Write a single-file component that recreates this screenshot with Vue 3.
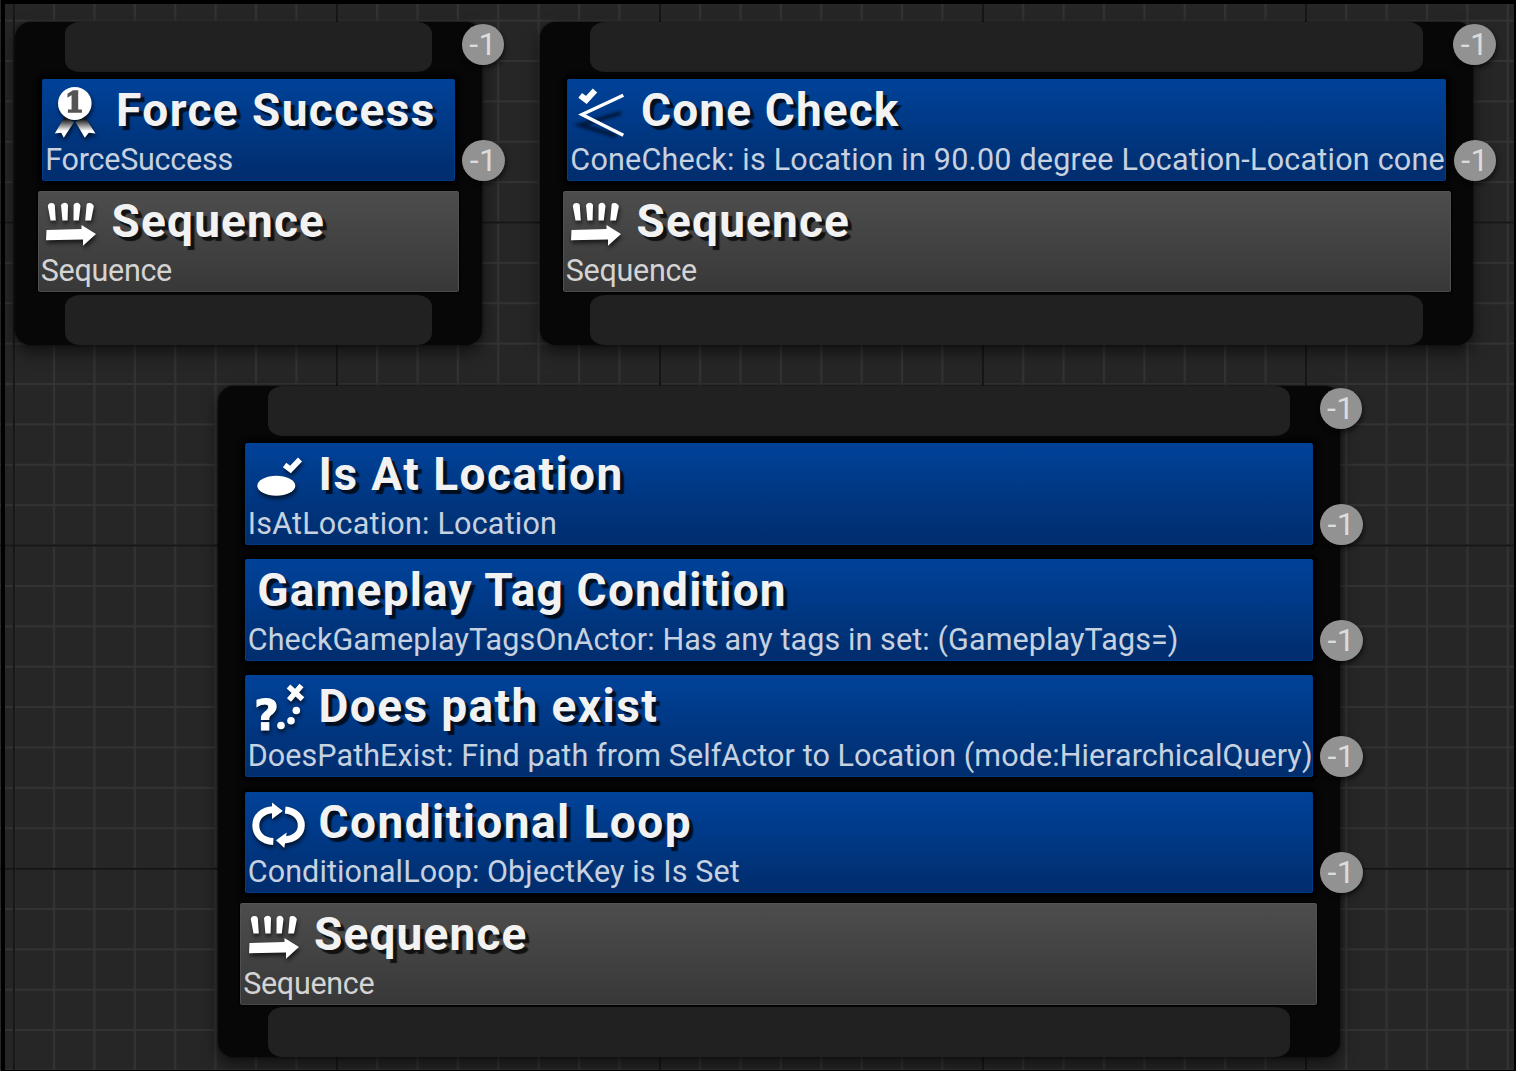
<script setup>
const sequence = { kind: 'task', icon: 'sequence', title: 'Sequence', detail: 'Sequence', track: [1.15, -0.3] }

// track: letter spacing in px for the title and for the detail line
const nodes = [
  {
    id: 'force', x: 15.3, y: 21.6, w: 466.5,
    blocks: [
      { kind: 'decorator', icon: 'medal', title: 'Force Success', detail: 'ForceSuccess', track: [1.4, -0.25] },
      sequence
    ]
  },
  {
    id: 'cone', x: 540.3, y: 21.6, w: 933,
    blocks: [
      { kind: 'decorator', icon: 'cone', title: 'Cone Check', detail: 'ConeCheck: is Location in 90.00 degree Location-Location cone', track: [1.1, 0.23] },
      sequence
    ]
  },
  {
    id: 'conditions', x: 217.7, y: 385.6, w: 1122,
    blocks: [
      { kind: 'decorator', icon: 'location', title: 'Is At Location', detail: 'IsAtLocation: Location', track: [1.45, 0.22] },
      { kind: 'decorator', icon: '', title: 'Gameplay Tag Condition', detail: 'CheckGameplayTagsOnActor: Has any tags in set: (GameplayTags=)', track: [1.2, 0.11] },
      { kind: 'decorator', icon: 'path', title: 'Does path exist', detail: 'DoesPathExist: Find path from SelfActor to Location (mode:HierarchicalQuery)', track: [1.4, 0.08] },
      { kind: 'decorator', icon: 'loop', title: 'Conditional Loop', detail: 'ConditionalLoop: ObjectKey is Is Set', track: [1.45, 0.1] },
      sequence
    ]
  }
]
</script>

<template>
  <main class="graph">
    <svg class="grid" width="1516" height="1071">
      <defs>
        <pattern id="minor" x="13.7" y="20.6" width="40.38" height="40.38" patternUnits="userSpaceOnUse">
          <path d="M0 0H40.38M0 40.38H40.38M0 0V40.38M40.38 0V40.38" stroke="#333" stroke-width="2.2" fill="none" />
        </pattern>
      </defs>
      <rect width="1516" height="1071" fill="url(#minor)" />
      <path d="M13.8 0V1071M336.8 0V1071M659.9 0V1071M982.9 0V1071M1305.9 0V1071M0 222.4H1516M0 545.4H1516M0 868.8H1516" stroke="#161616" stroke-width="2" />
    </svg>

    <section
      v-for="node in nodes"
      :key="node.id"
      class="node"
      :style="{ left: node.x + 'px', top: node.y + 'px', width: node.w + 'px' }"
    >
      <div class="pin"></div>
      <div class="stack">
        <article v-for="(block, i) in node.blocks" :key="i" class="block" :class="block.kind">
          <header class="heading">
            <svg v-if="block.icon" class="icon" :class="block.icon" width="62" height="62" viewBox="0 0 62 62">
              <g v-if="block.icon === 'medal'">
                <path d="M21.5 38 11.8 54.5 18.2 53.8 20.8 58.8 31 43 M41.8 38 52.5 54.5 45.8 53.8 41.8 58.8 32.5 43" fill="url(#ribbon)" />
                <defs>
                  <linearGradient id="ribbon" x1="0" y1="38" x2="0" y2="58" gradientUnits="userSpaceOnUse">
                    <stop offset="0.1" stop-color="#111" />
                    <stop offset="0.7" stop-color="#fff" />
                  </linearGradient>
                </defs>
                <ellipse cx="31.8" cy="24.4" rx="16.8" ry="16.5" />
                <text x="31.5" y="33" class="rank">1</text>
              </g>
              <g v-else-if="block.icon === 'cone'">
                <path class="cone-shade" d="M53 34 12 46 48 57" />
                <path class="line" stroke-width="3.4" d="M55.3 16.2 14 35.5 55.3 56.3" />
                <path class="line" stroke-width="6" d="M12.2 16.3 18.3 21 27 11.5" />
              </g>
              <g v-else-if="block.icon === 'location'">
                <ellipse cx="31.3" cy="42.8" rx="19" ry="10" />
                <path class="line" stroke-width="5.6" d="M39.6 22 45.5 26.5 55 16.5" />
              </g>
              <g v-else-if="block.icon === 'path'">
                <text x="9" y="53.5" class="query">?</text>
                <path class="line" stroke-width="5.4" d="M43.5 10.5 57.5 23.3M56.5 9.5 44 24" />
                <circle cx="51.3" cy="34.5" r="3.8" />
                <circle cx="46" cy="44.8" r="3.8" />
                <circle cx="36" cy="49.5" r="3.8" />
              </g>
              <g v-else-if="block.icon === 'loop'">
                <path class="line" stroke-width="7" d="M28.3 49.5C17 49 10.8 42 10.8 33.2 10.8 24.5 18 18 28 17.7" />
                <path class="line" stroke-width="7" d="M40.2 18C50 19 56.3 25.5 56.3 33.2 56.3 41.5 50 47 39 48" />
                <path d="M27 10.5 37.8 19 27 27ZM41.7 40.5 31 48.3 39.3 56Z" />
              </g>
              <g v-else>
                <path d="M9.8 16Q10.5 13 13.3 13 16 12.8 16.8 15L17.8 30.5H12.5ZM23 15Q24.5 12.8 27 12.8 29.5 13 30 15L29.6 30.5H24.4ZM35.6 15Q36.5 12.8 39 12.8 41.8 13 42.5 16L40.8 30.5H35.5ZM48.7 14Q50 12.5 52 13 55.5 14 55.8 16.5L53 30.5H47.2Z" />
                <path d="M8.5 40 43.5 39V35L58 44 45 55.7V49.6L8 50.2Z" />
              </g>
            </svg>
            <h2 :style="{ letterSpacing: block.track[0] + 'px' }">{{ block.title }}</h2>
          </header>
          <p :style="{ letterSpacing: block.track[1] + 'px' }">{{ block.detail }}</p>
          <span v-if="block.kind === 'decorator'" class="badge">-1</span>
        </article>
      </div>
      <div class="pin"></div>
      <span class="badge">-1</span>
    </section>
  </main>
</template>

<style>
body {
  margin: 0;
  background: #000;
}
</style>

<style scoped>
.graph {
  position: relative;
  width: 1516px;
  height: 1071px;
  overflow: hidden;
  background: #262626;
  font-family: Roboto, "Liberation Sans", sans-serif;
}

.graph::after {
  content: "";
  position: absolute;
  inset: 0 0 0 1px;
  border: solid #000;
  border-width: 4px 2px 1px 4px;
}

.grid {
  display: block;
}

.node {
  position: absolute;
  box-sizing: border-box;
  padding: 0 22.5px;
  border-radius: 16px;
  background: #070707;
  box-shadow: 0 7px 16px rgba(0, 0, 0, 0.55), 0 0 3px rgba(0, 0, 0, 0.6);
}

.pin {
  height: 50px;
  margin: 0 27.5px;
  border-radius: 15px / 12px;
  background: #212121;
}

.stack {
  display: flex;
  flex-direction: column;
  padding: 7.5px 0 2.5px;
}

.block {
  position: relative;
  box-sizing: border-box;
  height: 101.5px;
  border: 1px solid;
  border-radius: 2px;
  box-shadow: 0 0 5px 4px #000;
}

.decorator {
  margin: 0 4.5px;
  border-color: #00459c #003c8c #003984;
  background: linear-gradient(#004299, #002d6d);
}

.decorator + .decorator {
  margin-top: 14.7px;
}

.task {
  margin-top: 10px;
  border-color: #565656 #505050 #494949;
  background: linear-gradient(#4d4d4d, #383838);
  box-shadow: 0 0 2px 1px #000;
}

.heading {
  display: flex;
  height: 60.5px;
}

.icon {
  flex: none;
  margin: -0.7px 0 0 -0.7px;
  overflow: visible;
  fill: #fff;
  filter: drop-shadow(1px 3px 2px rgba(0, 0, 0, 0.65));
}

.task .icon {
  margin-top: -1.4px;
}

.icon.cone {
  filter: none;
}

.line {
  fill: none;
  stroke: #fff;
}

.cone-shade {
  fill: none;
  stroke: rgba(0, 8, 25, 0.65);
  stroke-width: 4px;
  filter: blur(1.5px);
}

.rank {
  fill: #555;
  stroke: #555;
  stroke-width: 1.6px;
  font: bold 27px "DejaVu Serif", serif;
  text-anchor: middle;
}

.query {
  stroke: #fff;
  stroke-width: 0.8px;
  font: bold 43px "DejaVu Sans", sans-serif;
}

h2 {
  margin: -0.6px 0 0 11.5px;
  color: #f2f2f2;
  font-size: 46px;
  font-weight: 700;
  line-height: 60px;
  white-space: nowrap;
  text-shadow: 4px 4px 1px rgba(0, 0, 0, 0.75);
}

p {
  margin: 0 0 0 2px;
  color: rgba(255, 255, 255, 0.78);
  font-size: 30.5px;
  line-height: 38px;
  white-space: nowrap;
}

.badge {
  position: absolute;
  top: 2px;
  right: -22.5px;
  width: 42.5px;
  height: 41px;
  border-radius: 50%;
  background: #929292;
  box-shadow: 1px 3px 5px rgba(0, 0, 0, 0.6);
  color: #dcdcdc;
  font-size: 32px;
  line-height: 41px;
  letter-spacing: 0.5px;
  text-align: center;
}

.decorator .badge {
  top: 59.5px;
  right: -51px;
}
</style>
